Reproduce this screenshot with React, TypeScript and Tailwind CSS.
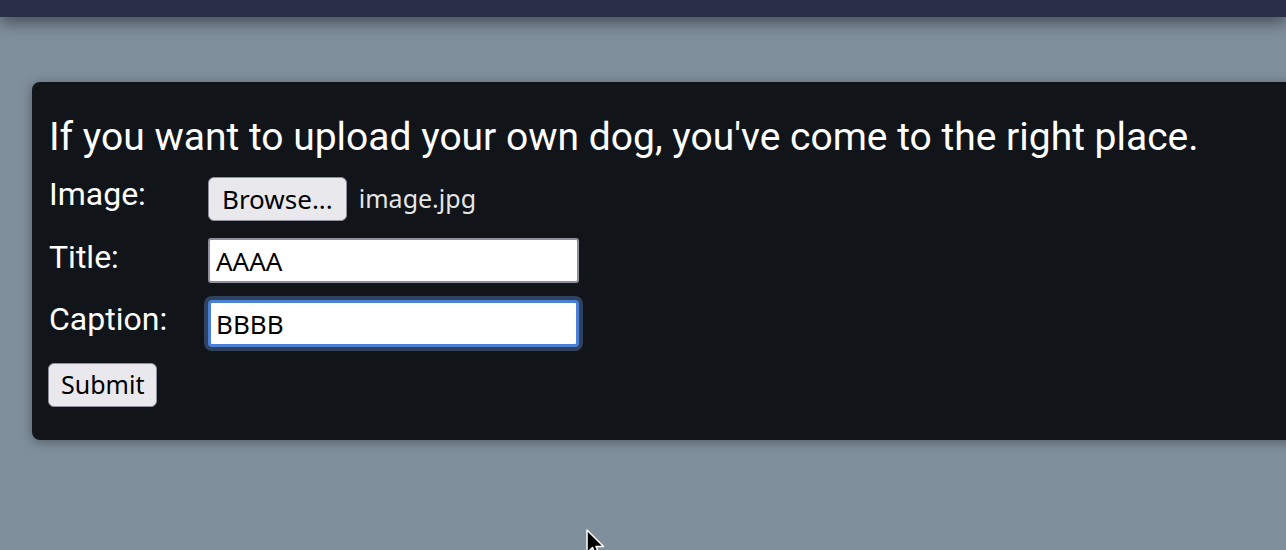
import React from "react";

const controlFont = { fontFamily: '"Noto Sans", "Open Sans", sans-serif' };

const Cursor = () => (
  <svg
    className="absolute left-[586px] top-[529px]"
    width="22"
    height="32"
    viewBox="0 0 22 32"
  >
    <path
      d="M1 1 L1 24 L6.5 18.5 L10 27 L13.5 25.5 L10 17.5 L17.5 17.5 Z"
      fill="#000"
      stroke="#fff"
      strokeWidth="1.5"
      strokeLinejoin="round"
    />
  </svg>
);

export default function App() {
  return (
    <div
      className="relative h-[550px] w-[1286px] overflow-hidden bg-[#7f8f9c]"
      style={{ fontFamily: 'Roboto, "Noto Sans", sans-serif' }}
    >
      {/* top bar */}
      <div className="h-[17px] w-full bg-[#282f47] shadow-[0_5px_16px_rgba(0,0,0,0.5)]" />

      {/* upload card */}
      <div className="ml-[32px] mt-[65px] w-[1300px] rounded-l-[8px] bg-[#111519] pb-[33px] pl-[17px] pt-[33px] shadow-[0_2px_12px_rgba(0,0,0,0.35)]">
        <h2 className="text-[39px] leading-[44px] text-white">
          If you want to upload your own dog, you've come to the right place.
        </h2>

        <div className="mt-[18px] grid grid-cols-[159px_auto] gap-y-[17px]">
          <label className="text-[32px] leading-[34px] text-white">Image:</label>
          <div className="flex items-center gap-[12px]" style={controlFont}>
            <button className="h-[44px] rounded-[6px] border-[1.5px] border-[#8f8f9d] bg-[#e9e9ed] px-[13px] text-[26px] text-black">
              Browse...
            </button>
            <span className="text-[25px] text-[#e6e6e6]">image.jpg</span>
          </div>

          <label className="pt-[2px] text-[32px] leading-[34px] text-white">Title:</label>
          <div>
            <input
              className="h-[45px] w-[371px] rounded-[3px] border-2 border-[#8f8f9d] bg-white px-[6px] text-[26px] text-black outline-none"
              style={controlFont}
              defaultValue="AAAA"
            />
          </div>

          <label className="pt-[2px] text-[32px] leading-[34px] text-white">Caption:</label>
          <div>
            <input
              className="h-[47px] w-[371px] rounded-[4px] border-[3px] border-[#4a80d8] bg-white px-[5px] text-[26px] text-black shadow-[0_0_0_4px_#2f4260] outline-none"
              style={controlFont}
              defaultValue="BBBB"
            />
          </div>
        </div>

        <button
          className="-ml-px mt-[16px] h-[44px] rounded-[6px] border-[1.5px] border-[#8f8f9d] bg-[#e9e9ed] px-[12px] text-[25px] text-black"
          style={controlFont}
        >
          Submit
        </button>
      </div>

      <Cursor />
    </div>
  );
}
